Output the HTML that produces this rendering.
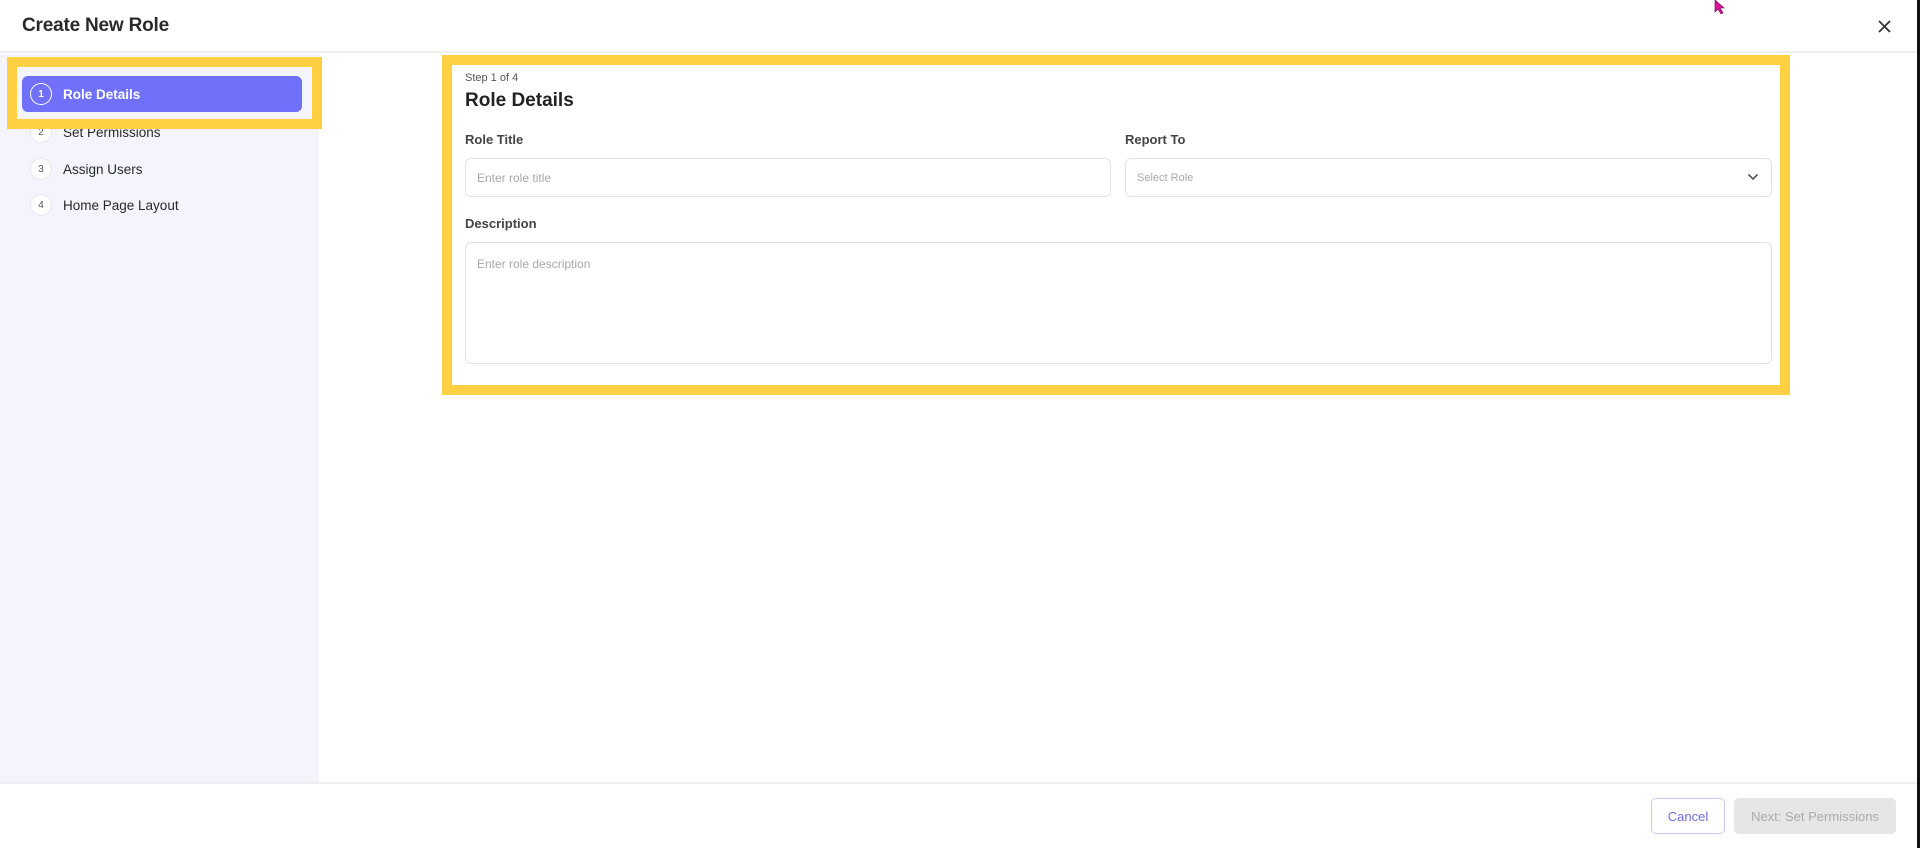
<!DOCTYPE html>
<html><head><meta charset="utf-8"><style>
*{box-sizing:border-box;margin:0;padding:0}
body{width:1920px;height:848px;overflow:hidden;background:#fff;font-family:"Liberation Sans",sans-serif;position:relative;color:#222}
.abs{position:absolute}
.hdr{left:0;top:0;width:1917px;height:53px;border-bottom:2px solid #eeeef2}
.title{left:22px;top:15px;font-size:19px;color:#2a2a2a;font-weight:bold;letter-spacing:-0.2px}
.side{left:0;top:54px;width:319px;height:728px;background:#f4f4fc}
.item{left:30px;height:24px;display:flex;align-items:center;font-size:13.5px;color:#2a2a2a;font-weight:500}
.circ{width:22px;height:22px;border-radius:50%;background:#fff;border:1px solid #e6e6ee;font-size:10px;display:flex;align-items:center;justify-content:center;margin-right:11px;color:#555}
.active{left:22px;top:76px;width:280px;height:36px;background:#7070fa;border-radius:6px;color:#fff;font-size:13.5px;font-weight:bold;display:flex;align-items:center;padding-left:8px}
.active .circ{background:transparent;border:1.5px solid #fff;color:#fff;margin-right:11px}
.yb{border:10px solid #ffd042}
.lbl{font-size:13px;font-weight:bold;color:#444}
.inp{border:1.5px solid #e3e3e6;border-radius:6px;background:#fff;font-size:12px;color:#a8a8a8;padding-left:11px;display:flex;align-items:center}
.foot{left:0;top:782px;width:1917px;height:2px;background:#eeeef2}
</style></head><body>
<div class="abs hdr"></div>
<div class="abs title">Create New Role</div>
<svg class="abs" style="left:1877px;top:19px" width="15" height="15" viewBox="0 0 15 15"><path d="M2 2L13 13M13 2L2 13" stroke="#333" stroke-width="1.8"/></svg>
<svg class="abs" style="left:1714px;top:0px" width="12" height="14" viewBox="0 0 12 14"><path d="M1 0L1 12L4 9L7 14L9 13L6 8L10 8Z" fill="#e0109a" stroke="#600040" stroke-width="0.6"/></svg>
<div class="abs" style="left:1917px;top:0;width:3px;height:848px;background:#111"></div>
<div class="abs side"></div>
<div class="abs item" style="top:120px"><div class="circ">2</div>Set Permissions</div>
<div class="abs item" style="top:157px"><div class="circ">3</div>Assign Users</div>
<div class="abs item" style="top:193px"><div class="circ">4</div>Home Page Layout</div>
<div class="abs yb" style="left:7px;top:57px;width:315px;height:72px"></div>
<div class="abs active"><div class="circ">1</div>Role Details</div>
<div class="abs yb" style="left:442px;top:55px;width:1348px;height:340px"></div>
<div class="abs" style="left:465px;top:72px;font-size:11px;color:#555">Step 1 of 4</div>
<div class="abs" style="left:465px;top:90px;font-size:19px;font-weight:bold;color:#222">Role Details</div>
<div class="abs lbl" style="left:465px;top:132px">Role Title</div>
<div class="abs lbl" style="left:1125px;top:132px">Report To</div>
<div class="abs inp" style="left:465px;top:158px;width:646px;height:39px">Enter role title</div>
<div class="abs inp" style="left:1125px;top:158px;width:647px;height:39px;font-size:11px">Select Role</div>
<svg class="abs" style="left:1747px;top:173px" width="12" height="8" viewBox="0 0 12 8"><path d="M1.5 1.5L6 6L10.5 1.5" stroke="#555" stroke-width="1.6" fill="none"/></svg>
<div class="abs lbl" style="left:465px;top:216px">Description</div>
<div class="abs inp" style="left:465px;top:242px;width:1307px;height:122px;align-items:flex-start;padding-top:14px">Enter role description</div>
<div class="abs foot"></div>
<div class="abs" style="left:1651px;top:798px;width:74px;height:36px;border:1.5px solid #c9c9f5;border-radius:5px;color:#6d6de0;font-size:13px;display:flex;align-items:center;justify-content:center">Cancel</div>
<div class="abs" style="left:1734px;top:798px;width:162px;height:36px;background:#e6e6e6;border-radius:5px;color:#ababab;font-size:13px;display:flex;align-items:center;justify-content:center">Next: Set Permissions</div>
</body></html>
